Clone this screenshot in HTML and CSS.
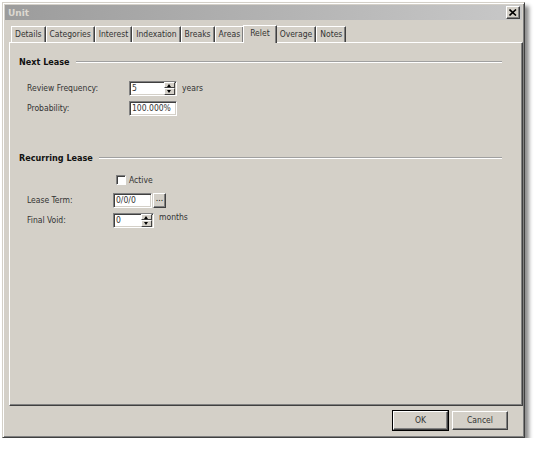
FILE: index.html
```html
<!DOCTYPE html>
<html>
<head>
<meta charset="utf-8">
<link rel="stylesheet" href="styles.css">
</head>
<body>
<div class="window">
  <div class="titlebar">
    <span class="title">Unit</span>
    <span class="close"><svg width="8" height="7" viewBox="0 0 8 7"><path d="M0.5 0.5 L7 6.5 M7 0.5 L0.5 6.5" stroke="#000" stroke-width="1.6"/></svg></span>
  </div>
  <div class="tabs">
    <span class="tab">Details</span>
    <span class="tab">Categories</span>
    <span class="tab">Interest</span>
    <span class="tab">Indexation</span>
    <span class="tab">Breaks</span>
    <span class="tab">Areas</span>
    <span class="tab active">Relet</span>
    <span class="tab">Overage</span>
    <span class="tab">Notes</span>
  </div>
  <div class="panel">
    <div class="group-title"><span>Next Lease</span><i></i></div>
    <div class="row r-review">
      <span class="label">Review Frequency:</span>
      <span class="field spin w48"><span class="val">5</span><span class="arrows"><b class="up"></b><b class="down"></b></span></span>
      <span class="unit">years</span>
    </div>
    <div class="row r-prob">
      <span class="label">Probability:</span>
      <span class="field w48"><span class="val">100.000%</span></span>
    </div>

    <div class="group-title g2"><span>Recurring Lease</span><i></i></div>
    <div class="row r-active">
      <span class="label"></span>
      <span class="check"></span><span class="unit">Active</span>
    </div>
    <div class="row r-term">
      <span class="label">Lease Term:</span>
      <span class="field w39"><span class="val">0/0/0</span></span>
      <span class="dots">...</span>
    </div>
    <div class="row r-void">
      <span class="label">Final Void:</span>
      <span class="field spin w41"><span class="val">0</span><span class="arrows"><b class="up"></b><b class="down"></b></span></span>
      <span class="unit months">months</span>
    </div>
  </div>
  <div class="buttons">
    <span class="btn default">OK</span>
    <span class="btn">Cancel</span>
  </div>
</div>
</body>
</html>
```
FILE: styles.css
```css
html, body { margin: 0; padding: 0; background: #fff; }
body { font-family: "DejaVu Sans Condensed", "DejaVu Sans", sans-serif; font-size: 8.5px; color: #000; }

.window {
  margin: 2px 0 0 2px;
  width: 519px;
  height: 432px;
  background: #d4d0c8;
  border-top: 1px solid #d4d0c8; border-left: 1px solid #d4d0c8;
  border-right: 1px solid #404040; border-bottom: 1px solid #404040;
  box-shadow: inset 1px 1px 0 #fff, inset -1px -1px 0 #808080, 4px 4px 4px rgba(0,0,0,0.45);
  padding: 1px;
  display: flex; flex-direction: column;
}
.titlebar {
  height: 15px; margin: 1px 1px 0 1px;
  background: linear-gradient(to right, #9c9c9c, #b6b6b6 60%, #c8c8c8);
  display: flex; align-items: center; justify-content: space-between;
  padding: 0 2px 0 3px;
}
.title { font-family: "DejaVu Sans", sans-serif; font-weight: bold; font-size: 9px; color: #dcd8d0; }
.close {
  width: 12px; height: 11px; background: #d4d0c8;
  border-top: 1px solid #fff; border-left: 1px solid #fff;
  border-right: 1px solid #404040; border-bottom: 1px solid #404040;
  box-shadow: inset -1px -1px 0 #808080;
  display: flex; align-items: center; justify-content: center;
}
.tabs { display: flex; margin: 4px 0 0 7px; height: 18px; align-items: flex-end; position: relative; z-index: 1; }
.tab {
  height: 15px; padding: 0 3px; line-height: 15px;
  border-top: 1px solid #fff; border-left: 1px solid #fff; border-right: 1px solid #404040;
  box-shadow: inset -1px 0 0 #808080;
  color: #333;
}
.tab.active { height: 17px; line-height: 15px; padding: 0 6px; margin: 0 -1px 0 -1px; background: #d4d0c8; position: relative; top: 1px; }
.panel {
  margin-left: 5px; width: 503px; height: 362px;
  border-top: 1px solid #fff; border-left: 1px solid #fff;
  border-right: 1px solid #404040; border-bottom: 1px solid #404040;
  box-shadow: inset -1px -1px 0 #808080;
  padding: 0 0 0 9px;
}
.group-title { display: flex; align-items: center; margin-top: 13px; height: 12px; width: 483px; }
.group-title span { font-weight: bold; font-size: 9px; color: #111; margin-right: 6px; }
.group-title i { flex: 1; height: 0; border-top: 1px solid #a0a0a0; border-bottom: 1px solid #fff; }
.g2 { margin-top: 36px; }
.row { display: flex; align-items: center; height: 16px; padding-left: 8px; }
.r-review { margin-top: 12px; }
.r-prob { margin-top: 4px; }
.r-active { margin-top: 10px; height: 12px; }
.r-term { margin-top: 6px; }
.r-void { margin-top: 4px; }
.label { color: #333; }
.r-review .label, .r-prob .label { width: 102px; }
.r-active .label, .r-term .label, .r-void .label { width: 86px; }
.field {
  height: 13px; background: #fff; display: flex; align-items: center;
  border-top: 1px solid #808080; border-left: 1px solid #808080;
  border-right: 1px solid #fff; border-bottom: 1px solid #fff;
  box-shadow: inset 1px 1px 0 #404040, inset -1px -1px 0 #d4d0c8;
  padding-left: 2px; color: #333;
}
.w48 { width: 44px; }
.w39 { width: 35px; }
.w41 { width: 37px; }
.val { flex: 1; }
.arrows { display: flex; flex-direction: column; width: 11px; height: 13px; margin-right: 1px; }
.arrows b {
  flex: 1; background: #d4d0c8; position: relative;
  border-top: 1px solid #fff; border-left: 1px solid #fff;
  border-right: 1px solid #404040; border-bottom: 1px solid #404040;
  box-sizing: border-box;
}
.arrows b::after { content: ""; position: absolute; left: 2px; top: 1px; border-left: 2.5px solid transparent; border-right: 2.5px solid transparent; }
.arrows .up::after { border-bottom: 3px solid #000; }
.arrows .down::after { border-top: 3px solid #000; }
.unit { margin-left: 5px; color: #333; }
.months { align-self: flex-start; margin-top: 0; }
.check {
  width: 8px; height: 8px; background: #fff;
  border-top: 1px solid #808080; border-left: 1px solid #808080;
  border-right: 1px solid #fff; border-bottom: 1px solid #fff;
  box-shadow: inset 1px 1px 0 #404040;
  margin-left: 3px;
}
.r-active .unit { margin-left: 3px; }
.dots {
  width: 11px; height: 13px; margin-left: 1px; background: #d4d0c8; line-height: 9px; text-align: center;
  border-top: 1px solid #fff; border-left: 1px solid #fff;
  border-right: 1px solid #404040; border-bottom: 1px solid #404040;
  box-shadow: inset -1px -1px 0 #808080;
}
.buttons { display: flex; justify-content: flex-end; gap: 4px; margin: 5px 15px 0 0; }
.btn {
  width: 54px; height: 17px; line-height: 17px; text-align: center; color: #333;
  background: #d4d0c8;
  border-top: 1px solid #fff; border-left: 1px solid #fff;
  border-right: 1px solid #404040; border-bottom: 1px solid #404040;
  box-shadow: inset -1px -1px 0 #808080;
}
.btn.default { outline: 1px solid #000; outline-offset: 0; width: 53px; }
```
